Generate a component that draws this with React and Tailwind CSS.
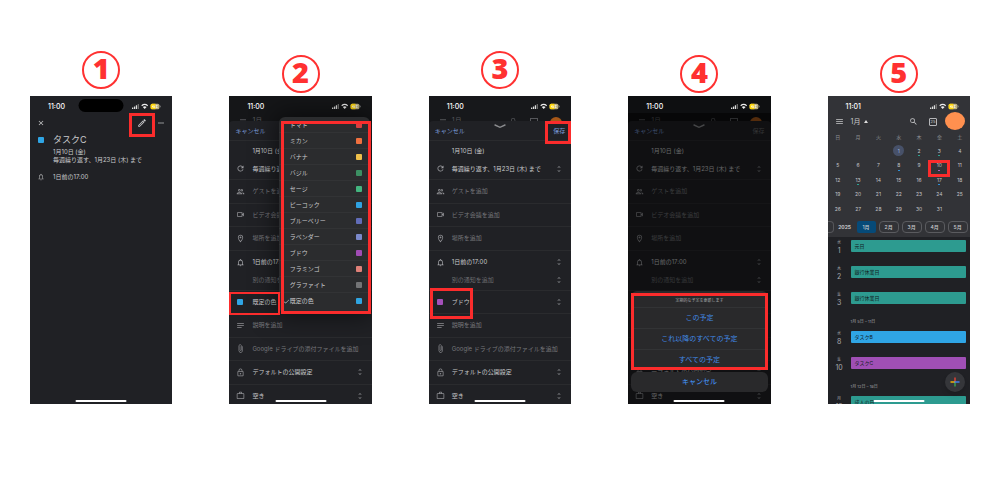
import React from "react";
import {
  MdAttachFile,
  MdCheck,
  MdClose,
  MdMenu,
  MdMoreHoriz,
  MdNotes,
  MdNotificationsNone,
  MdOutlineEdit,
  MdOutlineLocationOn,
  MdOutlineLock,
  MdOutlinePeople,
  MdOutlineVideocam,
  MdRefresh,
  MdSearch,
  MdUnfoldMore,
  MdWorkOutline,
} from "react-icons/md";

function StatusBar({ time }) {
  return (
    <div className="relative z-10 flex h-[17px] shrink-0 items-center justify-between pt-[3px] pr-[11px] pl-[18px] text-white">
      <span className="text-[7px] leading-[9px] font-medium">{time}</span>
      <svg viewBox="0 0 30 7" className="h-[7px] w-[30px]" aria-hidden="true">
        <rect x="1" y="4.5" width="1.3" height="1.5" rx=".3" fill="#ddd" />
        <rect x="2.9" y="3.5" width="1.3" height="2.5" rx=".3" fill="#ddd" />
        <rect x="4.8" y="2.3" width="1.3" height="3.7" rx=".3" fill="#ddd" />
        <rect x="6.7" y="1" width="1.2" height="5" rx=".3" fill="#777" />
        <path d="M10.7 2.7 Q13.7 .2 16.7 2.7" fill="none" stroke="#eee" strokeWidth="1.2" />
        <path d="M11.8 4 Q13.7 2.5 15.6 4 L13.7 6.1Z" fill="#eee" />
        <rect x="19.6" y=".8" width="8.8" height="5.4" rx="1.5" fill="#b9ad7c" />
        <path d="M21.1 .8 H24.4 V6.2 H21.1 A1.5 1.5 0 0 1 19.6 4.7 V2.3 A1.5 1.5 0 0 1 21.1 .8Z" fill="#ffd60a" />
        <path d="M22.2 2.2 L21.3 4 H23.4 M23.2 2.6 V5 M24.6 2.3 H26.2 L25.3 3.4 L26.2 4.6 H24.6" fill="none" stroke="#fff" strokeWidth=".7" />
        <rect x="28.8" y="2.7" width=".7" height="1.6" fill="#aaa" />
      </svg>
    </div>
  );
}

function HomeBar() {
  return (
    <div className="absolute bottom-[2px] left-1/2 z-20 h-[2px] w-[51px] -translate-x-1/2 rounded-full bg-white" />
  );
}

function Phone({ label, className, children }) {
  return (
    <section
      aria-label={label}
      className={"relative flex h-77 flex-col overflow-hidden text-[6px] leading-[8px] whitespace-nowrap text-[#c9cacc] " + className}
    >
      {children}
      <HomeBar />
    </section>
  );
}

function Highlight({ className }) {
  return <div className={"pointer-events-none absolute z-30 border-[#fb2c2c] " + className} />;
}

function DetailPhone() {
  return (
    <Phone label="予定の詳細" className="bg-[#202125]">
      <div className="absolute top-[3px] left-1/2 h-[13px] w-[45px] -translate-x-1/2 rounded-full bg-black" />
      <StatusBar time="11:00" />
      <div className="flex h-5 items-center pr-[7px] pl-[7px]">
        <button aria-label="閉じる"><MdClose className="size-2" /></button>
        <button aria-label="編集" className="ml-auto"><MdOutlineEdit className="size-[10px]" /></button>
        <button aria-label="その他" className="ml-[10px]"><MdMoreHoriz className="size-2" /></button>
      </div>
      <div className="grid grid-cols-[23px_1fr] items-center">
        <span className="ml-2 size-[6px] rounded-[1px] bg-[#2fa5e5]" />
        <h2 className="text-[9px] leading-[14px]">タスクC</h2>
        <p className="col-start-2 mt-[1px]">1月10日 (金)</p>
        <p className="col-start-2">毎週繰り返す、1月23日 (木) まで</p>
        <MdNotificationsNone className="mt-[9px] ml-[7px] size-2 text-[#a0a1a3]" />
        <p className="mt-[9px]">1日前の17:00</p>
      </div>
      <Highlight className="top-[17px] left-[99px] h-6 w-[26px] border-3" />
    </Phone>
  );
}

function FormRow({ icon: Icon, swatch, muted, stepper, children }) {
  return (
    <button
      className={
        "grid min-h-0 w-full flex-1 grid-cols-[23px_1fr_auto] items-center border-b border-[#2a2b2e] pr-2 text-left " +
        (muted ? "text-[#77787c]" : "text-[#c9cacc]")
      }
    >
      {swatch ? (
        <span className={"ml-2 size-[6px] rounded-[1px] " + swatch} />
      ) : (
        <Icon className="ml-[7px] size-[9px] text-[#8e8f93]" />
      )}
      <span>{children}</span>
      {stepper && <MdUnfoldMore className="size-2 text-[#85868a]" />}
    </button>
  );
}

function SubRow({ muted, stepper, children }) {
  return (
    <button className={"flex w-full items-center justify-between pr-2 pl-[23px] text-left " + (muted ? "text-[#6c6d71]" : "")}>
      <span>{children}</span>
      {stepper && <MdUnfoldMore className="size-2 text-[#85868a]" />}
    </button>
  );
}

function EditForm({ color, swatch, handle, saveClass }) {
  return (
    <div className="relative flex flex-1 flex-col">
      <div className="flex h-2 items-start overflow-hidden pt-1 pr-[9px] pl-[10px] leading-none text-[#55565a]" aria-hidden="true">
        <MdMenu className="mr-[5px] size-2 shrink-0" />
        <span className="text-[7px]">1月</span>
        <MdSearch className="mr-3 ml-auto size-2 shrink-0" />
        <span className="mt-[1px] mr-3 size-2 shrink-0 border border-[#55565a]" />
        <span className="size-3 shrink-0 rounded-full bg-[#a85818]" />
      </div>
      <div className="relative flex shrink-0 flex-col rounded-t-sm bg-[#202125]">
        <div className="flex h-5 items-center justify-between border-b border-[#2a2b2e] pr-[6px] pl-[6px] text-[#7c9ddb]">
          <button>キャンセル</button>
          <button className={saveClass}>保存</button>
        </div>
        {handle && (
          <svg viewBox="0 0 12 5" className="absolute top-[3px] left-1/2 h-[5px] w-3 -translate-x-1/2" aria-hidden="true">
            <path d="M1 1 L6 3.3 L11 1" fill="none" stroke="#8a8b8e" strokeWidth="1.4" strokeLinecap="round" />
          </svg>
        )}
        <div className="flex h-[267px] flex-col">
          <div className="flex h-[39px] flex-col gap-[9px] border-b border-[#2a2b2e] pt-[6px]">
            <SubRow>1月10日 (金)</SubRow>
            <button className="grid grid-cols-[23px_1fr_auto] items-center pr-2 text-left">
              <MdRefresh className="ml-[7px] size-[9px] text-[#a0a1a5]" />
              <span>毎週繰り返す、1月23日 (木) まで</span>
              <MdUnfoldMore className="size-2 text-[#85868a]" />
            </button>
          </div>
          <FormRow icon={MdOutlinePeople} muted>ゲストを追加</FormRow>
          <FormRow icon={MdOutlineVideocam} muted>ビデオ会議を追加</FormRow>
          <FormRow icon={MdOutlineLocationOn} muted>場所を追加</FormRow>
          <div className="flex h-10 flex-col gap-[9px] border-b border-[#2a2b2e] pt-[7px]">
            <button className="grid grid-cols-[23px_1fr_auto] items-center pr-2 text-left">
              <MdNotificationsNone className="ml-[7px] size-[9px] text-[#a0a1a5]" />
              <span>1日前の17:00</span>
              <MdUnfoldMore className="size-2 text-[#85868a]" />
            </button>
            <SubRow muted stepper>別の通知を追加</SubRow>
          </div>
          <FormRow swatch={swatch} stepper>{color}</FormRow>
          <FormRow icon={MdNotes} muted>説明を追加</FormRow>
          <FormRow icon={MdAttachFile} muted>Google ドライブの添付ファイルを追加</FormRow>
          <FormRow icon={MdOutlineLock} stepper>デフォルトの公開設定</FormRow>
          <FormRow icon={MdWorkOutline} stepper>空き</FormRow>
        </div>
      </div>
    </div>
  );
}

const COLORS = [
  ["トマト", "bg-[#d94040]"],
  ["ミカン", "bg-[#f0703f]"],
  ["バナナ", "bg-[#efc04a]"],
  ["バジル", "bg-[#3c9063]"],
  ["セージ", "bg-[#43b57f]"],
  ["ピーコック", "bg-[#2fa2e2]"],
  ["ブルーベリー", "bg-[#616cb8]"],
  ["ラベンダー", "bg-[#7b89cb]"],
  ["ブドウ", "bg-[#a04cb5]"],
  ["フラミンゴ", "bg-[#e08078]"],
  ["グラファイト", "bg-[#737476]"],
  ["既定の色", "bg-[#2fa5e2]"],
];

function ColorPhone() {
  return (
    <Phone label="色の選択" className="bg-[#151618]">
      <StatusBar time="11:00" />
      <EditForm color="既定の色" swatch="bg-[#2fa5e5]" saveClass="invisible" />
      <ul className="absolute top-[21px] right-[2px] z-10 h-[196px] w-[91px] rounded-md bg-[#2b2c2e] shadow-[0_0_24px_4px_rgba(0,0,0,0.5)]">
        {COLORS.map(([name, swatch]) => (
          <li key={name} className="h-4 border-b border-[#323335] last:border-0">
            <button className="grid h-full w-full grid-cols-[11px_1fr_auto] items-center pr-2 text-left">
              <span className="pl-1">{name === "既定の色" && <MdCheck className="size-[7px]" />}</span>
              <span>{name}</span>
              <span className={"size-[6px] rounded-[1px] " + swatch} />
            </button>
          </li>
        ))}
      </ul>
      <Highlight className="top-[25px] right-[1px] h-[193px] w-[90px] border-3" />
      <Highlight className="top-[196px] left-0 h-[23px] w-[51px] border-2" />
    </Phone>
  );
}

function SavePhone() {
  return (
    <Phone label="予定の保存" className="bg-[#17181b]">
      <StatusBar time="11:00" />
      <EditForm color="ブドウ" swatch="bg-[#a550bb]" handle />
      <Highlight className="top-[25px] right-0 h-[23px] w-[26px] border-3" />
      <Highlight className="top-[192px] left-[1px] h-[31px] w-[43px] border-3" />
    </Phone>
  );
}

function UpdatePhone() {
  return (
    <Phone label="予定の更新" className="bg-[#0e0f11]">
      <StatusBar time="11:00" />
      <EditForm color="ブドウ" swatch="bg-[#a550bb]" handle saveClass="text-[#66676a]" />
      <div className="absolute inset-x-0 top-[17px] bottom-0 bg-black/50" />
      <div className="absolute inset-x-[3px] bottom-3 z-10 flex flex-col gap-[2px] text-center text-[7px] text-[#4189e6]">
        <div className="flex flex-col overflow-hidden rounded-md bg-[#29292b]">
          <p className="pt-1 text-[4px] leading-[12px] text-[#a5a6a8]">定期的な予定を更新します</p>
          <button className="h-[21px] border-t border-[#323335]">この予定</button>
          <button className="h-[21px] border-t border-[#323335]">これ以降のすべての予定</button>
          <button className="h-[21px] border-t border-[#323335]">すべての予定</button>
        </div>
        <button className="h-5 rounded-md bg-[#29292b] font-medium">キャンセル</button>
      </div>
      <Highlight className="inset-x-[3px] top-[197px] h-[77px] border-3" />
    </Phone>
  );
}

const DAYS = [null, null, null, ...Array.from({ length: 31 }, (_, i) => i + 1), null];
const WEEKS = [0, 7, 14, 21, 28].map((start) => DAYS.slice(start, start + 7));
const DOTS = {
  2: "bg-[#2ba393]",
  3: "bg-[#2ba393]",
  8: "bg-[#2f8fd8]",
  10: "bg-[#b05cc5]",
  13: "bg-[#2ba393]",
  17: "bg-[#2f8fd8]",
};

function MonthTable() {
  return (
    <table className="w-full table-fixed text-center text-[5px] leading-[6px] text-[#c3c4c7]">
      <thead>
        <tr className="h-[13px] text-[#8f9094]">
          {["日", "月", "火", "水", "木", "金", "土"].map((d) => (
            <th key={d} className="p-0 font-normal">{d}</th>
          ))}
        </tr>
      </thead>
      <tbody>
        {WEEKS.map((week, w) => (
          <tr key={w} className={w % 2 ? "h-[14px]" : "h-[15px]"}>
            {week.map((day, d) => (
              <td key={d} className="p-0">
                <span
                  className={
                    "relative mx-auto flex size-[11px] items-center justify-center rounded-full " +
                    (day === 1 ? "bg-[#475169] text-[#9db4dc]" : "")
                  }
                >
                  {day}
                  {DOTS[day] && <span className={"absolute bottom-0 h-[1px] w-[2px] " + DOTS[day]} />}
                </span>
              </td>
            ))}
          </tr>
        ))}
      </tbody>
    </table>
  );
}

function AgendaItem({ weekday, day, color, children }) {
  return (
    <li className="grid h-[26px] shrink-0 grid-cols-[23px_1fr] items-start pr-1">
      <div className="flex flex-col items-center text-[#a9aaad]">
        <span className="text-[4px] leading-[5px]">{weekday}</span>
        <span className="mt-[2px] text-[7px] leading-[8px]">{day}</span>
      </div>
      <a href="#event" className={"h-3 rounded-[1px] pl-1 text-[5px] leading-[12px] text-[#12201f] " + color}>
        {children}
      </a>
    </li>
  );
}

function CalendarPhone() {
  return (
    <Phone label="カレンダー" className="bg-[#202125]">
      <div className="shrink-0 bg-[#323337]">
        <StatusBar time="11:01" />
        <div className="flex h-[17px] items-center pr-[5px] pl-[7px]">
          <button aria-label="メニュー"><MdMenu className="size-[9px]" /></button>
          <button className="ml-[7px] flex items-center gap-1 text-[7px]">
            1月
            <svg viewBox="0 0 4 3" className="h-[3px] w-1" aria-hidden="true"><path d="M2 0 4 3H0Z" fill="#ddd" /></svg>
          </button>
          <button aria-label="検索" className="ml-auto"><MdSearch className="size-[9px]" /></button>
          <button aria-label="今日" className="mr-2 ml-[11px] flex size-2 items-center justify-center rounded-[1px] border border-[#b5b6b9] text-[4px] leading-none">
            25
          </button>
          <button aria-label="アカウント" className="-mt-[2px] h-[18px] w-5 rounded-[50%] bg-[#ff904f]" />
        </div>
        <MonthTable />
        <div className="flex h-[21px] items-center gap-[3px] text-[5px] leading-[6px] font-medium">
          <span className="h-3 w-[6px] shrink-0 rounded-r-sm border border-l-0 border-[#55565a]" />
          <span className="mr-[1px] w-4 shrink-0 text-center font-bold">2025</span>
          <button className="h-3 w-[19px] shrink-0 rounded-[2px] bg-[#064a78]">1月</button>
          {["2月", "3月", "4月", "5月"].map((m) => (
            <button key={m} className="h-3 w-[20px] shrink-0 rounded-sm border border-[#5a5b5f]">{m}</button>
          ))}
          <span className="h-3 w-5 shrink-0 rounded-sm border border-[#55565a]" />
        </div>
      </div>
      <ul className="flex min-h-0 flex-1 flex-col pt-[3px]">
        <AgendaItem weekday="水" day="1" color="bg-[#2d9b90]">元日</AgendaItem>
        <AgendaItem weekday="木" day="2" color="bg-[#2d9b90]">銀行休業日</AgendaItem>
        <AgendaItem weekday="金" day="3" color="bg-[#2d9b90]">銀行休業日</AgendaItem>
        <li className="h-[13px] shrink-0 pl-[23px] text-[4px] text-[#a5a6a9]">1月 5日 – 11日</li>
        <AgendaItem weekday="水" day="8" color="bg-[#2fa5e5]">タスクB</AgendaItem>
        <AgendaItem weekday="金" day="10" color="bg-[#a04fb5]">タスクC</AgendaItem>
        <li className="h-[13px] shrink-0 pl-[23px] text-[4px] text-[#a5a6a9]">1月 12日 – 18日</li>
        <AgendaItem weekday="月" day="13" color="bg-[#2d9b90]">成人の日</AgendaItem>
      </ul>
      <button aria-label="予定を作成" className="absolute right-[5px] bottom-3 z-10 flex size-5 items-center justify-center rounded-full bg-[#35363a] shadow-md">
        <svg viewBox="0 0 10 10" className="size-[10px]" aria-hidden="true">
          <path d="M5 .5V5" stroke="#ea4335" strokeWidth="1.4" />
          <path d="M5 5V9.5" stroke="#34a853" strokeWidth="1.4" />
          <path d="M.5 5H5" stroke="#fbbc04" strokeWidth="1.4" />
          <path d="M4.3 5H9.5" stroke="#4285f4" strokeWidth="1.4" />
        </svg>
      </button>
      <Highlight className="top-[64px] right-5 h-[17px] w-[22px] border-3" />
    </Phone>
  );
}

const STEPS = [
  [DetailPhone, "pt-[51px]"],
  [ColorPhone, "pt-[55px]"],
  [SavePhone, "pt-[51px]"],
  [UpdatePhone, "pt-[55px]"],
  [CalendarPhone, "pt-[55px]"],
];

export default function App() {
  return (
    <main className="min-h-screen bg-white px-[30px] font-['Inter','Noto_Sans_CJK_JP',sans-serif]" lang="ja">
      <ol className="grid grid-cols-5 gap-[57px]">
        {STEPS.map(([Screen, top], i) => (
          <li key={i} className="min-w-0">
            <div className={"flex h-24 justify-center " + top}>
              <span className="flex size-[38px] items-center justify-center rounded-full border-2 border-[#ff3131] pb-[5px] font-['Open_Sans','Noto_Sans',sans-serif] text-[29px] leading-none font-extrabold text-[#ff3131]">
                {i + 1}
              </span>
            </div>
            <Screen />
          </li>
        ))}
      </ol>
    </main>
  );
}
